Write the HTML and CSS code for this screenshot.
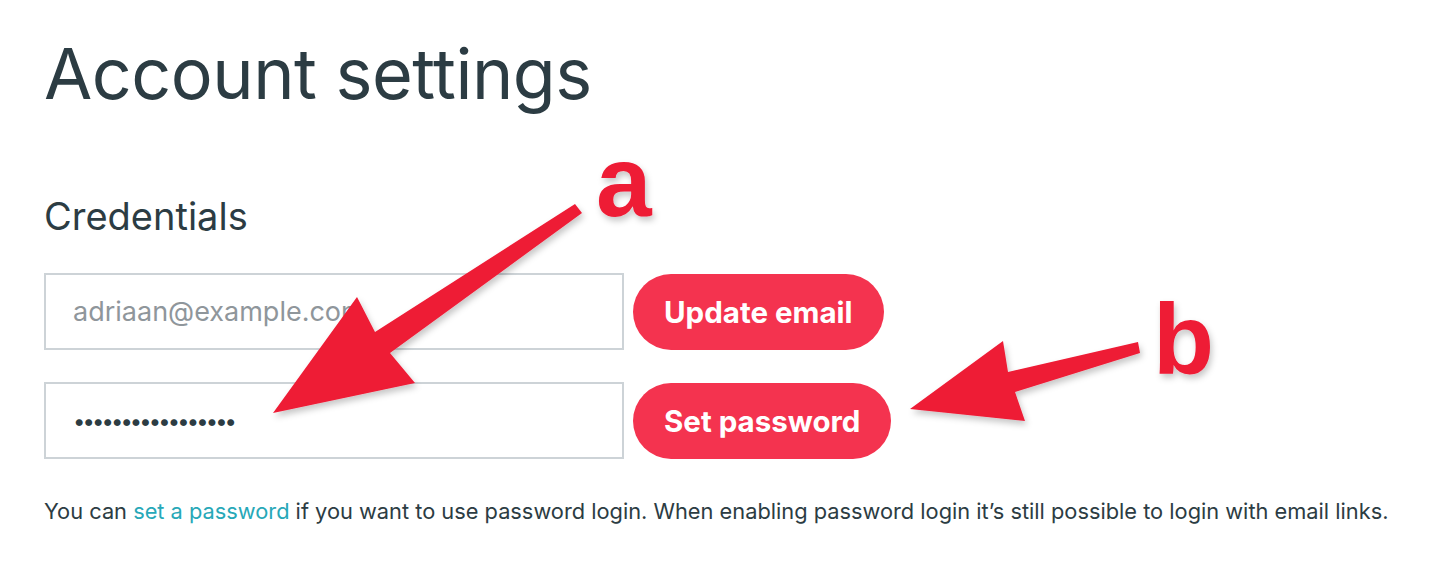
FILE: index.html
```html
<!DOCTYPE html>
<html lang="en">
<head>
<meta charset="utf-8">
<title>Account settings</title>
<link rel="stylesheet" href="styles.css">
</head>
<body>
<main class="page">
  <h1 class="title">Account settings</h1>
  <section class="credentials">
    <h2 class="section-title">Credentials</h2>
    <div class="row">
      <input class="field" type="email" placeholder="adriaan@example.com">
      <button class="btn" type="button">Update email</button>
    </div>
    <div class="row">
      <input class="field field-password" type="password" value="aaaaaaaaaaaaaaaaa">
      <button class="btn" type="button">Set password</button>
    </div>
    <p class="note">You can <a href="#" class="link">set a password</a> if you want to use password login. When enabling password login it’s still possible to login with email links.</p>
  </section>

  <svg class="annotations" width="1440" height="567" viewBox="0 0 1440 567" aria-hidden="true">
    <defs>
      <filter id="shadow" x="-20%" y="-20%" width="140%" height="140%">
        <feDropShadow dx="2" dy="4" stdDeviation="3" flood-color="#000" flood-opacity="0.22"/>
      </filter>
    </defs>
    <g filter="url(#shadow)" fill="#ee1b36">
      <polygon points="575,204 582,213 390,353 415,383 273,413 357,297 375,332"/>
      <polygon points="1138,342 1140,353 1015,392 1025,421 910,409 1003,341 1008,372"/>
      <text class="label" x="596" y="216">a</text>
      <text class="label" x="1153" y="374">b</text>
    </g>
  </svg>
</main>
</body>
</html>
```

FILE: styles.css
```css
html, body {
  margin: 0;
  padding: 0;
  background: #ffffff;
}

body {
  font-family: Inter, "Noto Sans", "Liberation Sans", sans-serif;
  color: #2c3c43;
}

.page {
  position: relative;
  width: 1440px;
  height: 567px;
  box-sizing: border-box;
  padding: 34px 0 0 44px;
  overflow: hidden;
}

.title {
  margin: 0;
  font-size: 70px;
  font-weight: 400;
  line-height: 80px;
  letter-spacing: -0.5px;
  color: #2c3c43;
}

.credentials {
  margin-top: 80px;
}

.section-title {
  margin: 0 0 35px 0;
  font-size: 38px;
  font-weight: 400;
  line-height: 44px;
  color: #2c3c43;
}

.row {
  display: flex;
  align-items: center;
  gap: 9px;
  margin-bottom: 32px;
}

.field {
  box-sizing: border-box;
  width: 580px;
  height: 77px;
  margin: 0;
  padding: 0 27px;
  border: 2px solid #cdd3d7;
  border-radius: 0;
  background: #fff;
  font-family: inherit;
  font-size: 27px;
  color: #2c3c43;
  outline: none;
}

.field::placeholder {
  color: #8f969b;
}

.field-password {
  font-size: 22px;
  letter-spacing: -2.9px;
}

.btn {
  box-sizing: border-box;
  height: 76px;
  padding: 0 31px;
  border: 0;
  border-radius: 38px;
  background: #f4334f;
  color: #ffffff;
  font-family: inherit;
  font-size: 29.5px;
  font-weight: 700;
  cursor: pointer;
}

.note {
  margin: 0;
  padding-top: 6px;
  font-size: 21.8px;
  line-height: 28px;
  color: #2c3c43;
}

.link {
  color: #27a8b8;
  text-decoration: none;
}

.annotations {
  position: absolute;
  left: 0;
  top: 0;
  pointer-events: none;
}

.label {
  font-family: "Liberation Sans", Arial, sans-serif;
  font-weight: 700;
  font-size: 100px;
}
```
